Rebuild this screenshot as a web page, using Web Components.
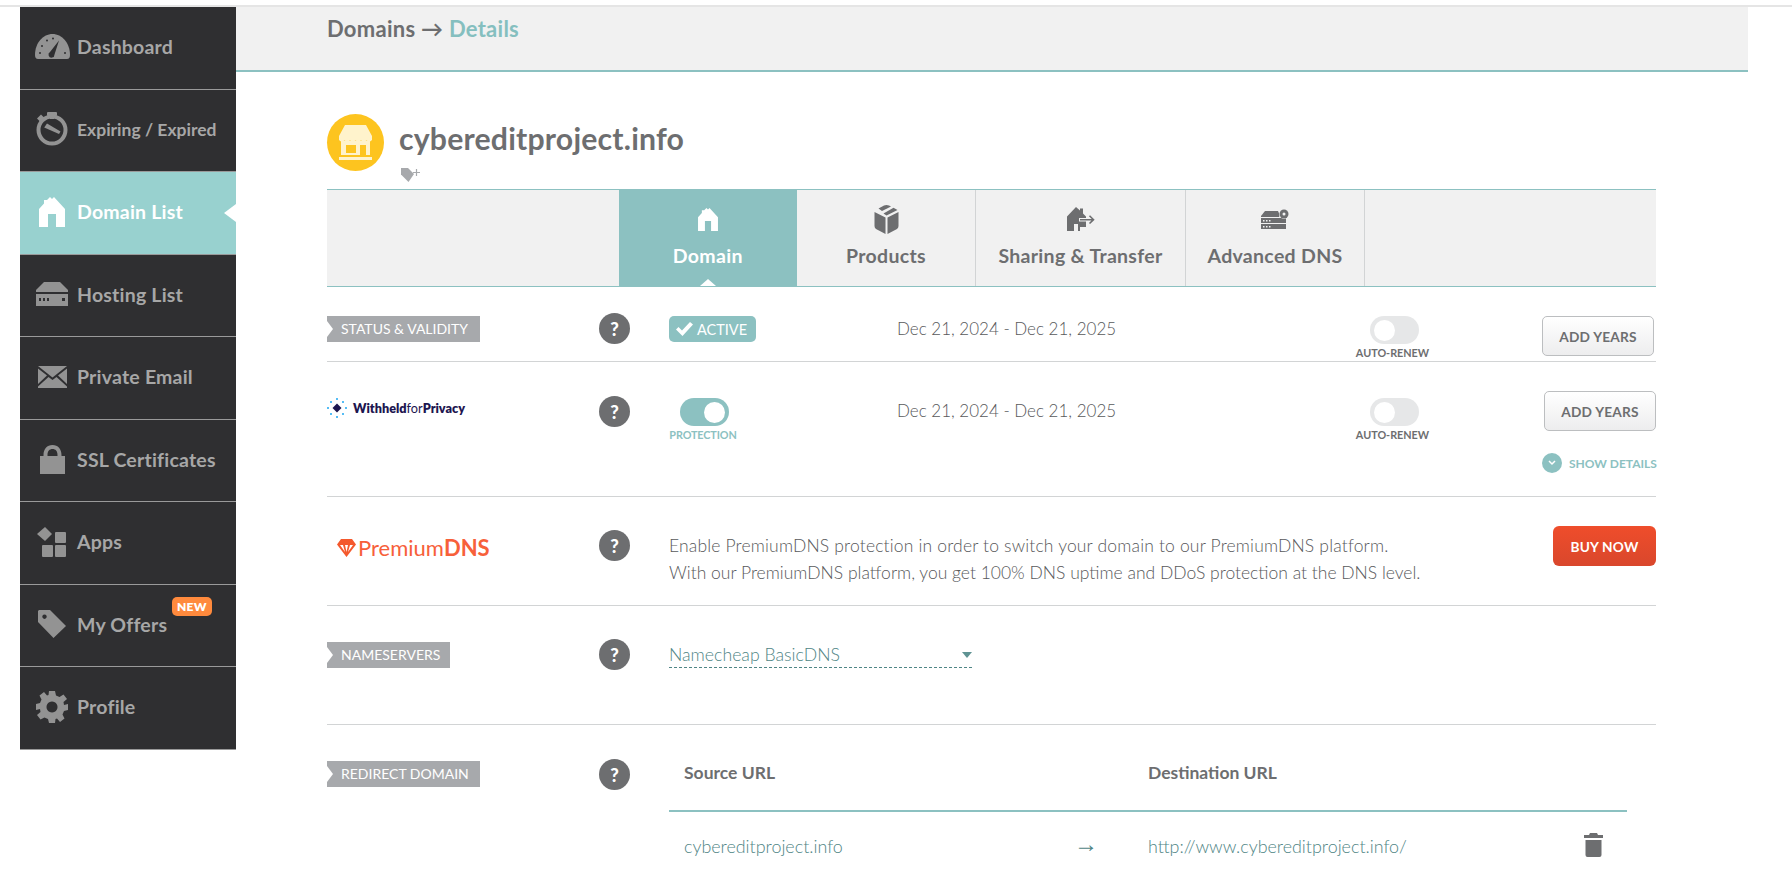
<!DOCTYPE html>
<html lang="en"><head><meta charset="utf-8"><title>Domain details</title>
<style>
html,body{margin:0;height:871px;overflow:hidden;background:#fff;font-family:Lato,"Open Sans",sans-serif;color:#6d6e70}
</style></head><body>
<nc-app>
  <nc-sidebar slot="side">
    <nc-nav label="Dashboard" icon="gauge"></nc-nav>
    <nc-nav label="Expiring / Expired" icon="timer" small></nc-nav>
    <nc-nav label="Domain List" icon="home" active></nc-nav>
    <nc-nav label="Hosting List" icon="server"></nc-nav>
    <nc-nav label="Private Email" icon="mail"></nc-nav>
    <nc-nav label="SSL Certificates" icon="lock"></nc-nav>
    <nc-nav label="Apps" icon="apps"></nc-nav>
    <nc-nav label="My Offers" icon="tag" badge="NEW"></nc-nav>
    <nc-nav label="Profile" icon="gear"></nc-nav>
  </nc-sidebar>
  <nc-crumb></nc-crumb>
  <nc-title name="cybereditproject.info"></nc-title>
  <nc-tabs></nc-tabs>

  <nc-row pt="26" h="75">
    <nc-label slot="label" style="margin-top:3px;padding-right:11.500px">STATUS &amp; VALIDITY</nc-label>
    <nc-help slot="help"></nc-help>
    <nc-flex style="margin-top:3px">
      <nc-badge style="margin-right:141px">ACTIVE</nc-badge>
      <nc-date style="width:460px">Dec 21, 2024 - Dec 21, 2025</nc-date>
      <nc-toggle text="AUTO-RENEW"></nc-toggle>
      <nc-btn style="margin-left:auto;margin-right:2px">ADD YEARS</nc-btn>
    </nc-flex>
  </nc-row>

  <nc-row pt="29" h="135">
    <nc-logo-privacy slot="label" style="margin-top:7px"></nc-logo-privacy>
    <nc-help slot="help" style="margin-top:5px"></nc-help>
    <nc-flex>
      <nc-toggle on text="PROTECTION" style="margin:7px 157px 0 0"></nc-toggle>
      <nc-date style="width:460px;margin-top:7px">Dec 21, 2024 - Dec 21, 2025</nc-date>
      <nc-toggle text="AUTO-RENEW" style="margin-top:7px"></nc-toggle>
      <nc-more style="margin-left:auto"><nc-btn>ADD YEARS</nc-btn></nc-more>
    </nc-flex>
  </nc-row>

  <nc-row pt="29" h="109">
    <nc-logo-premium slot="label" style="margin:9px 0 0 10px"></nc-logo-premium>
    <nc-help slot="help" style="margin-top:4px"></nc-help>
    <nc-flex>
      <nc-desc style="margin-top:6px"><span style="letter-spacing:.17px">Enable PremiumDNS protection in order to switch your domain to our PremiumDNS platform.</span><br><span>With our PremiumDNS platform, you get 100% DNS uptime and DDoS protection at the DNS level.</span></nc-desc>
      <nc-btn buy style="margin-left:auto">BUY NOW</nc-btn>
    </nc-flex>
  </nc-row>

  <nc-row pt="33" h="119">
    <nc-label slot="label" style="margin-top:3px">NAMESERVERS</nc-label>
    <nc-help slot="help"></nc-help>
    <nc-select style="margin-top:3px">Namecheap BasicDNS</nc-select>
  </nc-row>

  <nc-row pt="34" h="146" last>
    <nc-label slot="label" style="margin-top:2px;padding-right:11.500px">REDIRECT DOMAIN</nc-label>
    <nc-help slot="help"></nc-help>
    <nc-redirect source="cybereditproject.info" dest="http://www.cybereditproject.info/"></nc-redirect>
  </nc-row>
</nc-app>

<script>
const HOME='M11 0 13 2 15 0 26 12V30H17V17H9V30H0V12L5 6.500V3H8Z';
const ICONS={
gauge:`<svg width="35" height="25" viewBox="0 0 35 25"><path fill="#939393" d="M3 25Q0 25 0 21C0 9 8 0 17.500 0S35 9 35 21Q35 25 32 25Z"/><g fill="#2f2f31"><circle cx="5" cy="19" r="1"/><circle cx="7" cy="12" r="1"/><circle cx="12" cy="6.500" r="1"/><circle cx="18" cy="4.500" r="1"/><circle cx="30" cy="19" r="1"/><path d="M24 6.500 19.500 20.500a3 3 0 1 1-4.500-2.500Z"/></g></svg>`,
timer:`<svg width="32" height="34" viewBox="0 0 32 34"><g fill="#939393"><rect x="11" y="0" width="10" height="4" rx="1"/><rect x="14" y="3" width="4" height="4"/><path d="M1 6.500 5 2.500 8.500 6 4.500 10Z"/><path d="M8.200 15.500 11 11.500 24.500 19.500 23 22Z"/></g><circle cx="16" cy="18" r="13.500" fill="none" stroke="#939393" stroke-width="4"/></svg>`,
home:`<svg width="26" height="30" viewBox="0 0 26 30"><path fill="#fff" d="${HOME}"/></svg>`,
server:`<svg width="32" height="24" viewBox="0 0 32 24"><path fill="#939393" d="M8 0H24L32 8V10H0V8Z"/><path fill="#939393" fill-rule="evenodd" d="M0 12H32V24H0ZM3 16V19H5V16ZM7 16V19H9V16ZM11 16V19H13V16ZM26 16V19H29V16Z"/></svg>`,
mail:`<svg width="29" height="22" viewBox="0 0 29 22"><path fill="#939393" d="M0 0 14.500 11.500 29 0V0H0ZM0 2.500V18L9 9.500ZM29 2.500V18L20 9.500ZM0 20.500V22H29V20.500L18.500 11 14.500 14 10.500 11Z"/></svg>`,
lock:`<svg width="25" height="29" viewBox="0 0 25 29"><path fill="#939393" fill-rule="evenodd" d="M3.500 11V10C3.500 4 7 0 12.500 0S21.500 4 21.500 10V11H25V29H0V11ZM7.500 11H17.500V10C17.500 6 15.500 4 12.500 4S7.500 6 7.500 10Z"/></svg>`,
apps:`<svg width="30" height="30" viewBox="0 0 30 30"><g fill="#939393"><path d="M8 0 15 7 8 14 0 7Z"/><rect x="18" y="5" width="11" height="11" rx="1"/><rect x="5" y="18" width="11" height="12" rx="1"/><rect x="18" y="18" width="11" height="12" rx="1"/></g></svg>`,
tag:`<svg width="28" height="28" viewBox="0 0 28 28"><path fill="#939393" fill-rule="evenodd" d="M1 0H12L28 16 15.500 28 0 12V1ZM6.500 4.500a2.200 2.200 0 1 0 .01 0Z"/></svg>`,
gear:`<svg width="32" height="32" viewBox="0 0 32 32"><path fill="#939393" fill-rule="evenodd" d="M13 0H19L20 4.500 23.500 6 27.500 3.500 31 8 27.500 11 28 14 32 13V19L28 20 26.500 23.500 28.500 27.500 24 31 21 27.500 19.500 28 19 32H13L12 28 8.500 26.500 4.500 28.500 1 24 4.500 21 4 18 0 19V13L4 12 5.500 8.500 3.500 4.500 8 1 11 4.500 12.500 4ZM16 10.500a5.500 5.500 0 1 0 .01 0Z"/></svg>`,
cube:`<svg width="25" height="29" viewBox="0 0 25 29"><path fill="#6d6e70" d="M10 .5Q12.500-.5 15 .5L17 1.500 8 6 4.500 3.500ZM19.500 2.800 23.500 5 12.500 10.500 9.500 8.500ZM.5 7 11.500 12.500V29L2 24Q.5 23 .5 21ZM24.500 7V21Q24.500 23 23 24L13.500 29V12.500Z"/></svg>`,
share:`<svg width="28" height="24" viewBox="0 0 28 24"><path fill="#6d6e70" d="M9 0 13 3.500V1.500H16V6.500L19 9.500V11H12V14.500H19V20H13V24H11V17H7V24H0V9.500Z"/><path fill="none" stroke="#6d6e70" stroke-width="1.600" d="M13 12.700H26M22.500 8.800 26.500 12.700 22.500 16.500"/></svg>`,
dns:`<svg width="28" height="20" viewBox="0 0 28 20"><path fill="#6d6e70" d="M4 2H17L19 6.500 18 8H0V7Z"/><path fill="#6d6e70" fill-rule="evenodd" d="M0 9H25V14H0ZM2 11V12.500H3.500V11ZM5 11V12.500H6.500V11ZM8 11V12.500H9.500V11ZM0 15H25V20H0ZM2 17V18.500H3.500V17ZM5 17V18.500H6.500V17ZM8 17V18.500H9.500V17Z"/><circle cx="23" cy="5" r="5" fill="#f1f1f1"/><circle cx="23" cy="5" r="4.500" fill="#6d6e70"/><circle cx="23" cy="5" r="1.500" fill="#f1f1f1"/></svg>`,
hometab:`<svg width="20" height="23" viewBox="0 0 26 30"><path fill="#fff" d="${HOME}"/></svg>`
};
function def(name,css,html){
  customElements.define(name,class extends HTMLElement{
    connectedCallback(){
      if(this.shadowRoot)return;
      const r=this.attachShadow({mode:'open'});
      r.innerHTML=`<style>${css}</style>`+(typeof html==='function'?html(this):html);
    }
  });
}
document.querySelector('nc-crumb').slot='top';
def('nc-app',`:host{display:block;border-top:2px solid #e5e5e5;margin-top:5px}
.w{display:flex;padding-left:20px}
main{width:1512px;flex:none}
.c{padding:0 92px 0 91px}`,
`<div class="w"><slot name="side"></slot><main><slot name="top"></slot><div class="c"><slot></slot></div></main></div>`);
def('nc-sidebar',`:host{display:block;width:216px;flex:none;background:#2f2f31;align-self:flex-start}`,`<slot></slot>`);
def('nc-nav',`:host{display:block;height:81.500px;border-bottom:1px solid #9a9a9a;position:relative}
a{display:flex;align-items:center;height:100%;padding-bottom:2px;box-sizing:border-box;color:#a7a7a7;font:700 19.500px Lato,sans-serif;letter-spacing:.2px}
:host([active]) a{background:#98d1cf;color:#fff}
:host([small]) a{font-size:17.500px;letter-spacing:0}
.i{width:57px;display:flex;justify-content:center;padding-left:7px;box-sizing:border-box;flex:none}
.b{position:absolute;left:152px;top:12px;background:#ff8a3d;color:#fff;font:800 12px/19px Lato,sans-serif;padding:0 5px;border-radius:5px;letter-spacing:.3px}
.n{position:absolute;right:0;top:50%;margin-top:-9px;width:0;height:0;border:9px solid transparent;border-left:0;border-right:12px solid #fff}`,
t=>`<a><span class="i">${ICONS[t.getAttribute('icon')]}</span><span>${t.getAttribute('label')}</span></a>${t.hasAttribute('badge')?`<span class="b">${t.getAttribute('badge')}</span>`:''}${t.hasAttribute('active')?'<i class="n"></i>':''}`);
def('nc-crumb',`:host{display:block;height:63px;background:#f1f1f1;border-bottom:2px solid #8cc1c1;padding-left:91px;font:700 22px/40px Lato,sans-serif;letter-spacing:.27px;color:#6d6e70}
b{color:#85bfbf;font-weight:700}
div{padding-top:2px}`,`<div>Domains → <b>Details</b></div>`);
def('nc-title',`:host{display:flex;gap:15px;padding-top:42px;height:75px}
.c{width:57px;height:57px;border-radius:50%;background:#fdc41f;display:flex;align-items:center;justify-content:center;flex:none}
h1{margin:0 0 5px;font:700 30.200px/49px Lato,sans-serif;color:#6d6e70;letter-spacing:.2px}
.t{display:block;margin-left:2px;height:14px}`,
t=>`<div class="c"><svg width="33" height="36" viewBox="0 0 33 36"><path fill="#fff3cc" d="M6 0H27L33 11V15Q30 18 27.500 15 25 18 22 15 19 18 16.500 15 14 18 11 15 8 18 5.500 15 3 18 0 15V11Z"/><path fill="#fff3cc" fill-rule="evenodd" d="M2 15.500H31V30H2ZM7 20V28H17V20ZM21 20V30H27V20Z"/><rect y="32" width="33" height="3" fill="#fff3cc"/></svg></div>
<div><h1>${t.getAttribute('name')}</h1><svg class="t" width="20" height="14" viewBox="0 0 20 14"><path fill="#a7a9ac" d="M0 0H7L13 6 7.500 14 0 6.500Z"/><path stroke="#a7a9ac" stroke-width="1.200" d="M12 4.500H19M15.500 1V8"/></svg></div>`);
def('nc-tabs',`:host{display:flex;height:96px;background:#f1f1f1;border-top:1px solid #8cc1c1;border-bottom:1px solid #8cc1c1;padding-left:291.500px}`,
`<nc-tab active w="178.500" icon="hometab">Domain</nc-tab><nc-tab w="179" icon="cube">Products</nc-tab><nc-tab w="210" icon="share">Sharing &amp; Transfer</nc-tab><nc-tab w="179" icon="dns">Advanced DNS</nc-tab>`);
def('nc-tab',`:host{display:flex;flex-direction:column;align-items:center;box-sizing:border-box;border-right:1px solid #d2d4d5;position:relative;color:#6d6e70;font:700 19.500px Lato,sans-serif;letter-spacing:.3px}
:host([active]){background:#8cc1c1;color:#fff;border-right:0}
.i{height:30px;margin-top:14px;display:flex;align-items:center}
.l{margin-top:9px;line-height:26px;white-space:nowrap}
.n{position:absolute;left:50%;bottom:0;margin-left:-8px;border:8px solid transparent;border-top:0;border-bottom:7px solid #fff}`,
t=>{t.style.width=t.getAttribute('w')+'px';return `<span class="i">${ICONS[t.getAttribute('icon')]}</span><span class="l"><slot></slot></span>${t.hasAttribute('active')?'<i class="n"></i>':''}`});
def('nc-row',`:host{display:grid;grid-template-columns:272px 70px 1fr;align-items:start;box-sizing:border-box;border-bottom:1px solid #d2d4d5}
:host([last]){border-bottom:0}`,
t=>{t.style.paddingTop=t.getAttribute('pt')+'px';t.style.height=t.getAttribute('h')+'px';return `<slot name="label"></slot><slot name="help"></slot><slot></slot>`});
def('nc-label',`:host{display:inline-block;justify-self:start;position:relative;background:#a7a9ac;color:#fff;font:400 14px/26px Lato,sans-serif;padding:0 9.500px 0 14px;white-space:nowrap}
i{position:absolute;left:0;top:50%;margin-top:-8px;border:8px solid transparent;border-left:6px solid #fff;border-right:0}`,`<i></i><slot></slot>`);
def('nc-help',`:host{display:flex;width:31px;height:31px;border-radius:50%;background:#6d6e70;color:#fff;align-items:center;justify-content:center;font:900 18.500px Lato,sans-serif}`,`?`);
def('nc-flex',`:host{display:flex;align-items:flex-start}`,`<slot></slot>`);
def('nc-badge',`:host{display:inline-flex;width:87px;height:26px;box-sizing:border-box;background:#8cc1c1;border-radius:5px;color:#fff;align-items:center;gap:4px;padding-left:7px;font:400 14.500px Lato,sans-serif}`,
`<svg width="17" height="14" viewBox="0 0 17 14"><path fill="#fff" d="M0 7.500 2.500 5 6 8.500 14 0 17 2.500 6.500 14Z"/></svg><slot></slot>`);
def('nc-date',`:host{display:block;font:300 17px/26px Lato,sans-serif;color:#58595b;white-space:nowrap}`,`<slot></slot>`);
def('nc-toggle',`:host{display:flex;flex-direction:column;align-items:center;width:71px;flex:none}
.t{width:49px;height:28px;border-radius:14px;background:#e6e7e8;position:relative;margin-left:4px}
.t i{position:absolute;left:4px;top:3.500px;width:21px;height:21px;border-radius:50%;background:#fff}
:host([on]) .t{background:#8cc1c1;margin-left:0}
:host([on]) .t i{left:24px}
span{font:700 10.800px/14px Lato,sans-serif;margin-top:2px;color:#6d6e70;white-space:nowrap}
:host([on]) span{color:#8cc1c1;letter-spacing:-.1px;margin-right:3px}`,
t=>`<div class="t"><i></i></div><span>${t.getAttribute('text')}</span>`);
def('nc-btn',`:host{display:inline-flex;align-items:center;justify-content:center;width:112px;height:40px;box-sizing:border-box;border:1px solid #bcbec0;border-radius:5px;background:linear-gradient(#fff,#ededee);color:#6d6e70;font:700 13.700px Lato,sans-serif;letter-spacing:.2px}
:host([buy]){width:103px;border:0;border-radius:6px;background:linear-gradient(#ef4d2b,#d9472c);color:#fff}`,`<slot></slot>`);
def('nc-more',`:host{display:flex;flex-direction:column;align-items:flex-end}
.s{display:flex;align-items:center;gap:7px;margin-top:22px;color:#8cc1c1;font:700 12px/19px Lato,sans-serif;white-space:nowrap;width:114px}
.c{width:20px;height:20px;border-radius:50%;background:#8cc1c1;display:flex;align-items:center;justify-content:center;flex:none}`,
`<slot></slot><div class="s"><span class="c"><svg width="8" height="6" viewBox="0 0 8 6"><path fill="none" stroke="#fff" stroke-width="1.500" d="M1 1 4 4 7 1"/></svg></span>SHOW DETAILS</div>`);
def('nc-desc',`:host{display:block;font:300 17.500px/27px Lato,sans-serif;color:#58595b;white-space:nowrap}`,`<slot></slot>`);
def('nc-select',`:host{display:flex;justify-content:space-between;align-items:center;width:303px;height:26px;box-sizing:border-box;border-bottom:1px dashed #4f8585;color:#4f8585;font:300 17.700px/25px Lato,sans-serif}
i{border:5.500px solid transparent;border-top:6px solid #5f9393;border-bottom:0}`,`<slot></slot><i></i>`);
def('nc-logo-privacy',`:host{display:flex;align-items:center;gap:6px;justify-self:start;font:800 12.700px/20px Lato,sans-serif;color:#1d1650}
span span{font-weight:400}`,
`<svg width="20" height="20" viewBox="0 0 20 20"><path fill="#1d1650" d="M10 5.500 14.500 10 10 14.500 5.500 10Z"/><g fill="#1ea7f2"><circle cx="10" cy="1" r="1"/><circle cx="10" cy="19" r="1"/><circle cx="1" cy="10" r="1"/><circle cx="19" cy="10" r="1"/><circle cx="4" cy="4" r="1"/><circle cx="16" cy="4" r="1"/><circle cx="4" cy="16" r="1"/><circle cx="16" cy="16" r="1"/></g></svg><span>Withheld<span>for</span>Privacy</span>`);
def('nc-logo-premium',`:host{display:flex;align-items:center;gap:2px;justify-self:start;font:400 22px/25px Lato,sans-serif;color:#f7603a}`,
`<svg width="19" height="18" viewBox="0 0 19 18"><path fill="#f4592d" fill-rule="evenodd" d="M4 0H15L19 5.500 9.500 18 0 5.500ZM3 6 8 13 6 6ZM8 6 9.500 13 11 6ZM13 6 11 13 16 6Z"/></svg><span>Premium<b style="font-weight:700">DNS</b></span>`);
def('nc-redirect',`:host{display:grid;grid-template-columns:408px 71px 436px 43px;width:958px}
.h{font:700 17.500px/28px Lato,sans-serif;height:51px;border-bottom:2px solid #8cc1c1;color:#6d6e70}
.p{padding-left:15px}
.d{font:300 17.900px/26px Lato,sans-serif;color:#4f8585;padding-top:21px;white-space:nowrap}
.a{font:400 24px/22px "Liberation Sans",sans-serif;margin-left:-3px}`,
t=>`<div class="h p">Source URL</div><div class="h"></div><div class="h">Destination URL</div><div class="h"></div>
<div class="d p">${t.getAttribute('source')}</div><div class="d a">→</div><div class="d">${t.getAttribute('dest')}</div>
<div class="d"><svg width="19" height="24" viewBox="0 0 19 24" style="display:block"><path fill="#6d6e70" d="M6 0H13L14 2H19V5H0V2H5ZM1.500 7H17.500V22Q17.500 24 15.500 24H3.500Q1.500 24 1.500 22Z"/></svg></div>`);
</script>
</body></html>
